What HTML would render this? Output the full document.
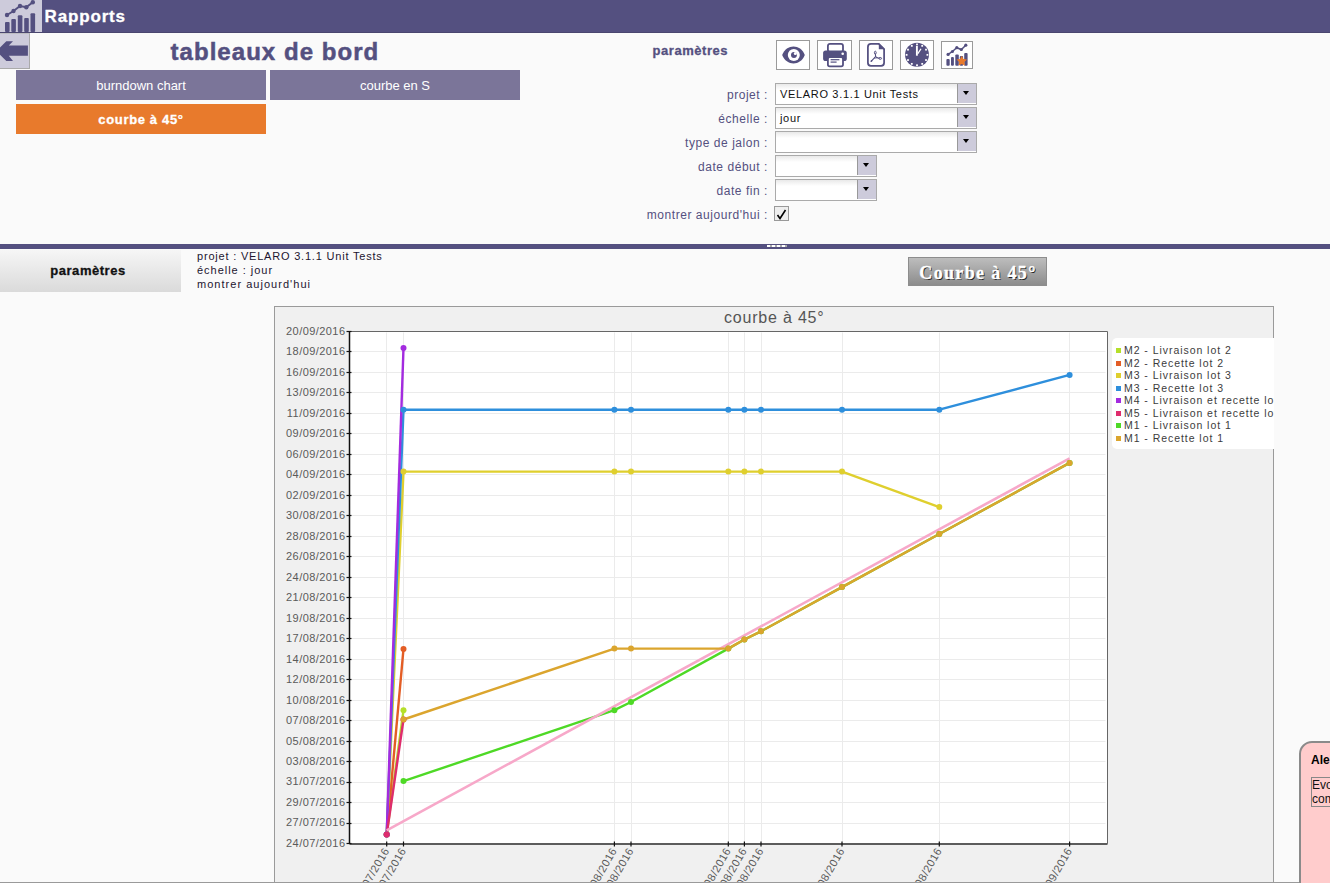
<!DOCTYPE html>
<html><head><meta charset="utf-8">
<style>
*{margin:0;padding:0;box-sizing:border-box}
html,body{width:1330px;height:883px;overflow:hidden;background:#fafafa;font-family:"Liberation Sans",sans-serif}
.a{position:absolute}
.t{position:absolute;white-space:nowrap;line-height:1}
#hdr{left:0;top:0;width:1330px;height:33px;background:#545080;border-bottom:1px solid #4a466f}
#hicon{left:0;top:0;width:42px;height:32px;background:#cdcbdb}
#back{left:0;top:33px;width:30px;height:36px;background:#cdcbdb;border-right:1px solid #aaa;border-bottom:1px solid #aaa;border-top:1px solid #bdbdc2}
.tab{position:absolute;height:30px;background:#7b7599;color:#fff;font-size:13px;text-align:center;line-height:30px;padding-top:1px}
.tbtn{position:absolute;top:40px;width:34px;height:30px;background:#fff;border:1px solid #9a9a9a}
.lbl{position:absolute;color:#545080;font-size:12px;text-align:right;white-space:nowrap;line-height:1;letter-spacing:0.55px}
.sel{position:absolute;left:775px;height:22px;border:1px solid #aaa;background:linear-gradient(#e9e9e9,#fff 6px,#fff)}
.sel .bt{position:absolute;right:0;top:0;width:19px;height:19px;background:#cdcbdb;border-left:1px solid #999}
.sel .bt:after{content:"";position:absolute;left:5.2px;top:7px;border-left:3.7px solid transparent;border-right:3.7px solid transparent;border-top:4.3px solid #000}
.sel .v{position:absolute;left:4px;top:4.6px;font-size:11px;color:#111;white-space:nowrap;line-height:1;letter-spacing:0.67px}
#split{left:0;top:244px;width:1330px;height:5px;background:#545080}
#ptab{left:0;top:250px;width:181px;height:42px;background:linear-gradient(#f6f6f6,#dadada);font-weight:bold;font-size:13px;text-align:center;line-height:42px;color:#111;letter-spacing:0.53px;padding-right:5px;-webkit-text-stroke:0.3px #111}
.info{position:absolute;left:197px;font-size:11px;color:#1d1530;white-space:nowrap;line-height:1;letter-spacing:0.8px}
#bigbtn{left:908px;top:257px;width:139px;height:29px;border:1px solid #8d8d8d;background:linear-gradient(#bdbdbd,#8c8c8c);color:#fff;font-family:"Liberation Serif",serif;font-weight:bold;font-size:18px;text-align:center;line-height:27px;text-shadow:1px 1px 0.6px #222;letter-spacing:1.35px;padding-left:1px;padding-top:1.5px;-webkit-text-stroke:0.35px #fff}
#chart{left:274px;top:306px;width:1000px;height:577px;background:#f0f0f0;overflow:hidden}
#cbord{left:0;top:0;width:1000px;height:600px;border:1px solid #9a9a9a}
#chart svg{position:absolute;left:0;top:0}
.yl{font-family:"Liberation Sans",sans-serif;font-size:11px;fill:#5a5a5a;letter-spacing:0.44px}
.xl{font-family:"Liberation Sans",sans-serif;font-size:11px;fill:#5a5a5a;letter-spacing:0.44px}
#ctitle{left:450px;top:4px;font-size:16px;color:#555;letter-spacing:0.8px}
#legend{left:838px;top:32px;width:200px;height:111px;background:#fff;border-radius:5px}
.li{position:absolute;left:0;height:12px;white-space:nowrap}
.sw{position:absolute;left:3.5px;top:3px;width:5.2px;height:5.2px}
.lt{position:absolute;left:12px;top:0;font-size:10.5px;color:#3c3c3c;line-height:1;letter-spacing:0.95px}
#bline{left:0;top:882px;width:1330px;height:1px;background:#9a9a9a}
#alert{left:1299px;top:741px;width:100px;height:160px;background:#ffcccc;border:2px solid #8a8a8a;border-radius:13px}
</style></head><body>
<div id="hdr" class="a"></div>
<div id="hicon" class="a">
<svg width="42" height="32" viewBox="0 0 42 32">
<g fill="#545080">
<rect x="5" y="22" width="4.6" height="10" rx="1"/>
<rect x="11.3" y="19" width="4.6" height="13" rx="1"/>
<rect x="17.8" y="15.2" width="4.6" height="16.8" rx="1"/>
<rect x="24.2" y="18" width="4.6" height="14" rx="1"/>
<rect x="30.5" y="13.2" width="4.6" height="18.8" rx="1"/>
<circle cx="7" cy="15" r="2.2"/><circle cx="13.5" cy="11" r="2.2"/><circle cx="20" cy="6" r="2.2"/><circle cx="26.3" cy="7.3" r="2.2"/><circle cx="32.8" cy="2.2" r="2.2"/>
</g>
<path d="M7 15 L13.5 11 L20 6 L26.3 7.3 L32.8 2.2" fill="none" stroke="#545080" stroke-width="2"/>
</svg></div>
<div class="t" style="left:44.5px;top:8px;font-size:17px;font-weight:bold;color:#fff;letter-spacing:0.85px;-webkit-text-stroke:0.3px #fff">Rapports</div>
<div id="back" class="a">
<svg width="29" height="35" viewBox="0 0 29 35"><path d="M6.3 7.2 L13 7.2 L8.8 11.6 L27.9 11.6 L27.9 21.8 L8.8 21.8 L13 27 L6.3 27 L-3.6 17 Z" fill="#545080"/></svg>
</div>
<div class="t" style="left:170.5px;top:40px;font-size:24px;font-weight:bold;color:#545080;letter-spacing:1.05px;-webkit-text-stroke:0.5px #545080">tableaux de bord</div>
<div class="tab" style="left:16px;top:70px;width:250px">burndown chart</div>
<div class="tab" style="left:270px;top:70px;width:250px">courbe en S</div>
<div class="tab" style="left:16px;top:104px;width:250px;background:#e87a2c;font-weight:bold;letter-spacing:0.65px;-webkit-text-stroke:0.3px #fff">courbe à 45°</div>

<div class="t" style="left:652.5px;top:44px;font-size:13px;font-weight:bold;color:#545080;letter-spacing:0.55px;-webkit-text-stroke:0.3px #545080">paramètres</div>
<div class="tbtn" style="left:776px"><svg width="32" height="28" viewBox="0 0 32 28"><path d="M5.2 13.9 C9.5 2.6, 23.5 2.6, 27.8 13.9 C23.5 25.2, 9.5 25.2, 5.2 13.9 Z" fill="#545080"/><circle cx="16.8" cy="14" r="6" fill="#fff"/><circle cx="16.95" cy="13.95" r="2.95" fill="#545080"/><circle cx="18.3" cy="12.6" r="1.5" fill="#fff"/></svg></div>
<div class="tbtn" style="left:817px;width:35px"><svg width="33" height="28" viewBox="0 0 33 28"><rect x="9.9" y="2.9" width="15.1" height="8" rx="2" fill="none" stroke="#545080" stroke-width="1.8"/><rect x="5.1" y="9.4" width="23.7" height="10.6" rx="2.6" fill="#545080"/><rect x="9.9" y="16.2" width="15.1" height="9.1" rx="1.8" fill="#fff" stroke="#545080" stroke-width="1.8"/><rect x="12.6" y="18.1" width="8.8" height="1.2" fill="#545080"/><rect x="12.6" y="20.5" width="6" height="1.2" fill="#545080"/><circle cx="24.7" cy="12.7" r="1.3" fill="#fff"/></svg></div>
<div class="tbtn" style="left:859px"><svg width="32" height="28" viewBox="0 0 32 28"><path d="M10.9 2.9 L18.8 2.9 L24.1 8.2 L24.1 21.8 Q24.1 24.8 21.1 24.8 L10.9 24.8 Q7.9 24.8 7.9 21.8 L7.9 5.9 Q7.9 2.9 10.9 2.9 Z" fill="none" stroke="#545080" stroke-width="1.75"/><path d="M18.8 2.2 L24.9 8.3 L18.8 8.3 Z" fill="#545080"/><path d="M15.4 13 L15.6 15.4 M14.4 16.9 L11.1 20.3 M16.9 16.6 L19.2 17.2" fill="none" stroke="#545080" stroke-width="1.1" stroke-linecap="round"/><ellipse cx="15.3" cy="11.7" rx="0.9" ry="1.5" fill="none" stroke="#545080" stroke-width="1"/><ellipse cx="20.2" cy="17.4" rx="1.4" ry="0.9" fill="none" stroke="#545080" stroke-width="1"/><path d="M15.5 15.2 L17.1 16.7 L14.3 17.1 Z" fill="none" stroke="#545080" stroke-width="1"/><circle cx="11.5" cy="19.9" r="0.8" fill="#545080"/></svg></div>
<div class="tbtn" style="left:900px"><svg width="32" height="28" viewBox="0 0 32 28"><circle cx="16" cy="13.85" r="12" fill="#545080"/><g fill="#fff"><rect x="15.10" y="2.55" width="1.8" height="1.8"/><rect x="20.30" y="3.94" width="1.8" height="1.8"/><rect x="24.11" y="7.75" width="1.8" height="1.8"/><rect x="25.50" y="12.95" width="1.8" height="1.8"/><rect x="24.11" y="18.15" width="1.8" height="1.8"/><rect x="20.30" y="21.96" width="1.8" height="1.8"/><rect x="15.10" y="23.35" width="1.8" height="1.8"/><rect x="9.90" y="21.96" width="1.8" height="1.8"/><rect x="6.09" y="18.15" width="1.8" height="1.8"/><rect x="4.70" y="12.95" width="1.8" height="1.8"/><rect x="6.09" y="7.75" width="1.8" height="1.8"/><rect x="9.90" y="3.94" width="1.8" height="1.8"/></g><path d="M15.9 5 L15.9 14.7" stroke="#fff" stroke-width="1.9"/><path d="M17 12.3 L19.8 8.2" stroke="#fff" stroke-width="1.2" stroke-linecap="round"/></svg></div>
<div class="tbtn" style="left:941px;top:41px;width:32px;height:28px"><svg width="30" height="26" viewBox="0 0 30 26"><g fill="#545080"><rect x="4.4" y="16.9" width="3.3" height="6.9" rx="1"/><rect x="9" y="15.1" width="2.9" height="8.7" rx="1"/><rect x="13.3" y="12.4" width="3.5" height="11.4" rx="1"/><rect x="17.8" y="14" width="3.3" height="9.8" rx="1"/><rect x="22.2" y="11" width="3.4" height="12.8" rx="1"/><circle cx="6.1" cy="12.4" r="1.6"/><circle cx="10.4" cy="9.5" r="1.6"/><circle cx="14.8" cy="5.7" r="1.6"/><circle cx="19.3" cy="7.5" r="1.6"/><circle cx="23.8" cy="3.2" r="1.6"/></g><path d="M6.1 12.4 L10.4 9.5 L14.8 5.7 L19.3 7.5 L23.8 3.2" fill="none" stroke="#545080" stroke-width="1.5"/><path d="M19.75 13.70 L21.40 16.93 L24.98 17.50 L22.41 20.07 L22.98 23.65 L19.75 22.00 L16.52 23.65 L17.09 20.07 L14.52 17.50 L18.10 16.93 Z" fill="#e87a2c"/></svg></div>

<div class="lbl" style="right:562px;top:89px">projet :</div>
<div class="lbl" style="right:562px;top:113px">échelle :</div>
<div class="lbl" style="right:562px;top:137px">type de jalon :</div>
<div class="lbl" style="right:562px;top:161px">date début :</div>
<div class="lbl" style="right:562px;top:185px">date fin :</div>
<div class="lbl" style="right:562px;top:209px">montrer aujourd'hui :</div>
<div class="sel" style="top:83px;width:202px"><span class="v">VELARO 3.1.1 Unit Tests</span><span class="bt"></span></div>
<div class="sel" style="top:107px;width:202px"><span class="v">jour</span><span class="bt"></span></div>
<div class="sel" style="top:131px;width:202px"><span class="bt"></span></div>
<div class="sel" style="top:155px;width:102px"><span class="bt"></span></div>
<div class="sel" style="top:179px;width:102px"><span class="bt"></span></div>
<div class="a" style="left:774px;top:206px;width:15px;height:15px;border:1px solid #999;background:#eee"><svg width="13" height="13" viewBox="0 0 13 13"><path d="M2.5 7 L5 10.5 L10.5 2" fill="none" stroke="#000" stroke-width="1.6"/></svg></div>

<div id="split" class="a"><div class="a" style="left:767px;top:1px;width:20px;height:2px;background:repeating-linear-gradient(90deg,#fff 0,#fff 3px,#aaa 3px,#aaa 5px)"></div></div>
<div id="ptab" class="a">paramètres</div>
<div class="info" style="top:251.3px">projet : VELARO 3.1.1 Unit Tests</div>
<div class="info" style="top:265.1px;letter-spacing:0.98px">échelle : jour</div>
<div class="info" style="top:278.6px;letter-spacing:1.03px">montrer aujourd'hui</div>
<div id="bigbtn" class="a">Courbe à 45°</div>

<div id="chart" class="a">
<div id="cbord" class="a"></div>
<svg width="1000" height="577" viewBox="274 306 1000 577">
<rect x="349.5" y="331.5" width="758.0" height="512.0" fill="#fff"/>
<line x1="351.5" y1="351.50" x2="1105.5" y2="351.50" stroke="#ebebeb" stroke-width="1"/>
<line x1="351.5" y1="372.50" x2="1105.5" y2="372.50" stroke="#ebebeb" stroke-width="1"/>
<line x1="351.5" y1="392.50" x2="1105.5" y2="392.50" stroke="#ebebeb" stroke-width="1"/>
<line x1="351.5" y1="413.50" x2="1105.5" y2="413.50" stroke="#ebebeb" stroke-width="1"/>
<line x1="351.5" y1="433.50" x2="1105.5" y2="433.50" stroke="#ebebeb" stroke-width="1"/>
<line x1="351.5" y1="454.50" x2="1105.5" y2="454.50" stroke="#ebebeb" stroke-width="1"/>
<line x1="351.5" y1="474.50" x2="1105.5" y2="474.50" stroke="#ebebeb" stroke-width="1"/>
<line x1="351.5" y1="495.50" x2="1105.5" y2="495.50" stroke="#ebebeb" stroke-width="1"/>
<line x1="351.5" y1="515.50" x2="1105.5" y2="515.50" stroke="#ebebeb" stroke-width="1"/>
<line x1="351.5" y1="536.50" x2="1105.5" y2="536.50" stroke="#ebebeb" stroke-width="1"/>
<line x1="351.5" y1="556.50" x2="1105.5" y2="556.50" stroke="#ebebeb" stroke-width="1"/>
<line x1="351.5" y1="577.50" x2="1105.5" y2="577.50" stroke="#ebebeb" stroke-width="1"/>
<line x1="351.5" y1="597.50" x2="1105.5" y2="597.50" stroke="#ebebeb" stroke-width="1"/>
<line x1="351.5" y1="618.50" x2="1105.5" y2="618.50" stroke="#ebebeb" stroke-width="1"/>
<line x1="351.5" y1="638.50" x2="1105.5" y2="638.50" stroke="#ebebeb" stroke-width="1"/>
<line x1="351.5" y1="659.50" x2="1105.5" y2="659.50" stroke="#ebebeb" stroke-width="1"/>
<line x1="351.5" y1="679.50" x2="1105.5" y2="679.50" stroke="#ebebeb" stroke-width="1"/>
<line x1="351.5" y1="700.50" x2="1105.5" y2="700.50" stroke="#ebebeb" stroke-width="1"/>
<line x1="351.5" y1="720.50" x2="1105.5" y2="720.50" stroke="#ebebeb" stroke-width="1"/>
<line x1="351.5" y1="741.50" x2="1105.5" y2="741.50" stroke="#ebebeb" stroke-width="1"/>
<line x1="351.5" y1="761.50" x2="1105.5" y2="761.50" stroke="#ebebeb" stroke-width="1"/>
<line x1="351.5" y1="782.50" x2="1105.5" y2="782.50" stroke="#ebebeb" stroke-width="1"/>
<line x1="351.5" y1="802.50" x2="1105.5" y2="802.50" stroke="#ebebeb" stroke-width="1"/>
<line x1="351.5" y1="823.50" x2="1105.5" y2="823.50" stroke="#ebebeb" stroke-width="1"/>
<line x1="386.5" y1="332.5" x2="386.5" y2="842.5" stroke="#ebebeb" stroke-width="1"/>
<line x1="403.5" y1="332.5" x2="403.5" y2="842.5" stroke="#ebebeb" stroke-width="1"/>
<line x1="614.5" y1="332.5" x2="614.5" y2="842.5" stroke="#ebebeb" stroke-width="1"/>
<line x1="631.5" y1="332.5" x2="631.5" y2="842.5" stroke="#ebebeb" stroke-width="1"/>
<line x1="728.5" y1="332.5" x2="728.5" y2="842.5" stroke="#ebebeb" stroke-width="1"/>
<line x1="744.5" y1="332.5" x2="744.5" y2="842.5" stroke="#ebebeb" stroke-width="1"/>
<line x1="761.5" y1="332.5" x2="761.5" y2="842.5" stroke="#ebebeb" stroke-width="1"/>
<line x1="842.5" y1="332.5" x2="842.5" y2="842.5" stroke="#ebebeb" stroke-width="1"/>
<line x1="939.5" y1="332.5" x2="939.5" y2="842.5" stroke="#ebebeb" stroke-width="1"/>
<line x1="1069.5" y1="332.5" x2="1069.5" y2="842.5" stroke="#ebebeb" stroke-width="1"/>
<path d="M349.5 843.5 L349.5 331.5 L1107.5 331.5 L1107.5 843.5 Z" fill="none" stroke="#666" stroke-width="1"/>
<line x1="349.5" y1="331.5" x2="349.5" y2="843.5" stroke="#111" stroke-width="1.5"/>
<line x1="349.5" y1="843.9" x2="1107.5" y2="843.9" stroke="#5c5c5c" stroke-width="2"/>
<line x1="346.5" y1="331.50" x2="351.5" y2="331.50" stroke="#111" stroke-width="1.2"/>
<text x="345.5" y="334.90" text-anchor="end" class="yl">20/09/2016</text>
<line x1="346.5" y1="351.50" x2="351.5" y2="351.50" stroke="#111" stroke-width="1.2"/>
<text x="345.5" y="355.38" text-anchor="end" class="yl">18/09/2016</text>
<line x1="346.5" y1="372.50" x2="351.5" y2="372.50" stroke="#111" stroke-width="1.2"/>
<text x="345.5" y="375.86" text-anchor="end" class="yl">16/09/2016</text>
<line x1="346.5" y1="392.50" x2="351.5" y2="392.50" stroke="#111" stroke-width="1.2"/>
<text x="345.5" y="396.34" text-anchor="end" class="yl">13/09/2016</text>
<line x1="346.5" y1="413.50" x2="351.5" y2="413.50" stroke="#111" stroke-width="1.2"/>
<text x="345.5" y="416.82" text-anchor="end" class="yl">11/09/2016</text>
<line x1="346.5" y1="433.50" x2="351.5" y2="433.50" stroke="#111" stroke-width="1.2"/>
<text x="345.5" y="437.30" text-anchor="end" class="yl">09/09/2016</text>
<line x1="346.5" y1="454.50" x2="351.5" y2="454.50" stroke="#111" stroke-width="1.2"/>
<text x="345.5" y="457.78" text-anchor="end" class="yl">06/09/2016</text>
<line x1="346.5" y1="474.50" x2="351.5" y2="474.50" stroke="#111" stroke-width="1.2"/>
<text x="345.5" y="478.26" text-anchor="end" class="yl">04/09/2016</text>
<line x1="346.5" y1="495.50" x2="351.5" y2="495.50" stroke="#111" stroke-width="1.2"/>
<text x="345.5" y="498.74" text-anchor="end" class="yl">02/09/2016</text>
<line x1="346.5" y1="515.50" x2="351.5" y2="515.50" stroke="#111" stroke-width="1.2"/>
<text x="345.5" y="519.22" text-anchor="end" class="yl">30/08/2016</text>
<line x1="346.5" y1="536.50" x2="351.5" y2="536.50" stroke="#111" stroke-width="1.2"/>
<text x="345.5" y="539.70" text-anchor="end" class="yl">28/08/2016</text>
<line x1="346.5" y1="556.50" x2="351.5" y2="556.50" stroke="#111" stroke-width="1.2"/>
<text x="345.5" y="560.18" text-anchor="end" class="yl">26/08/2016</text>
<line x1="346.5" y1="577.50" x2="351.5" y2="577.50" stroke="#111" stroke-width="1.2"/>
<text x="345.5" y="580.66" text-anchor="end" class="yl">24/08/2016</text>
<line x1="346.5" y1="597.50" x2="351.5" y2="597.50" stroke="#111" stroke-width="1.2"/>
<text x="345.5" y="601.14" text-anchor="end" class="yl">21/08/2016</text>
<line x1="346.5" y1="618.50" x2="351.5" y2="618.50" stroke="#111" stroke-width="1.2"/>
<text x="345.5" y="621.62" text-anchor="end" class="yl">19/08/2016</text>
<line x1="346.5" y1="638.50" x2="351.5" y2="638.50" stroke="#111" stroke-width="1.2"/>
<text x="345.5" y="642.10" text-anchor="end" class="yl">17/08/2016</text>
<line x1="346.5" y1="659.50" x2="351.5" y2="659.50" stroke="#111" stroke-width="1.2"/>
<text x="345.5" y="662.58" text-anchor="end" class="yl">14/08/2016</text>
<line x1="346.5" y1="679.50" x2="351.5" y2="679.50" stroke="#111" stroke-width="1.2"/>
<text x="345.5" y="683.06" text-anchor="end" class="yl">12/08/2016</text>
<line x1="346.5" y1="700.50" x2="351.5" y2="700.50" stroke="#111" stroke-width="1.2"/>
<text x="345.5" y="703.54" text-anchor="end" class="yl">10/08/2016</text>
<line x1="346.5" y1="720.50" x2="351.5" y2="720.50" stroke="#111" stroke-width="1.2"/>
<text x="345.5" y="724.02" text-anchor="end" class="yl">07/08/2016</text>
<line x1="346.5" y1="741.50" x2="351.5" y2="741.50" stroke="#111" stroke-width="1.2"/>
<text x="345.5" y="744.50" text-anchor="end" class="yl">05/08/2016</text>
<line x1="346.5" y1="761.50" x2="351.5" y2="761.50" stroke="#111" stroke-width="1.2"/>
<text x="345.5" y="764.98" text-anchor="end" class="yl">03/08/2016</text>
<line x1="346.5" y1="782.50" x2="351.5" y2="782.50" stroke="#111" stroke-width="1.2"/>
<text x="345.5" y="785.46" text-anchor="end" class="yl">31/07/2016</text>
<line x1="346.5" y1="802.50" x2="351.5" y2="802.50" stroke="#111" stroke-width="1.2"/>
<text x="345.5" y="805.94" text-anchor="end" class="yl">29/07/2016</text>
<line x1="346.5" y1="823.50" x2="351.5" y2="823.50" stroke="#111" stroke-width="1.2"/>
<text x="345.5" y="826.42" text-anchor="end" class="yl">27/07/2016</text>
<line x1="346.5" y1="843.50" x2="351.5" y2="843.50" stroke="#111" stroke-width="1.2"/>
<text x="345.5" y="846.90" text-anchor="end" class="yl">24/07/2016</text>
<line x1="386.7" y1="841.5" x2="386.7" y2="846.5" stroke="#111" stroke-width="1.2"/>
<line x1="403.5" y1="841.5" x2="403.5" y2="846.5" stroke="#111" stroke-width="1.2"/>
<line x1="614.4" y1="841.5" x2="614.4" y2="846.5" stroke="#111" stroke-width="1.2"/>
<line x1="631" y1="841.5" x2="631" y2="846.5" stroke="#111" stroke-width="1.2"/>
<line x1="728.3" y1="841.5" x2="728.3" y2="846.5" stroke="#111" stroke-width="1.2"/>
<line x1="744.4" y1="841.5" x2="744.4" y2="846.5" stroke="#111" stroke-width="1.2"/>
<line x1="761" y1="841.5" x2="761" y2="846.5" stroke="#111" stroke-width="1.2"/>
<line x1="842" y1="841.5" x2="842" y2="846.5" stroke="#111" stroke-width="1.2"/>
<line x1="939.3" y1="841.5" x2="939.3" y2="846.5" stroke="#111" stroke-width="1.2"/>
<line x1="1069.6" y1="841.5" x2="1069.6" y2="846.5" stroke="#111" stroke-width="1.2"/>
<text transform="translate(389.7,850.5) rotate(-60)" text-anchor="end" class="xl">25/07/2016</text>
<text transform="translate(406.5,850.5) rotate(-60)" text-anchor="end" class="xl">26/07/2016</text>
<text transform="translate(617.4,850.5) rotate(-60)" text-anchor="end" class="xl">08/08/2016</text>
<text transform="translate(634,850.5) rotate(-60)" text-anchor="end" class="xl">09/08/2016</text>
<text transform="translate(731.3,850.5) rotate(-60)" text-anchor="end" class="xl">15/08/2016</text>
<text transform="translate(747.4,850.5) rotate(-60)" text-anchor="end" class="xl">16/08/2016</text>
<text transform="translate(764,850.5) rotate(-60)" text-anchor="end" class="xl">17/08/2016</text>
<text transform="translate(845,850.5) rotate(-60)" text-anchor="end" class="xl">22/08/2016</text>
<text transform="translate(942.3,850.5) rotate(-60)" text-anchor="end" class="xl">28/08/2016</text>
<text transform="translate(1072.6,850.5) rotate(-60)" text-anchor="end" class="xl">05/09/2016</text>
<path d="M386.7 834.4 L403.5 710.3" fill="none" stroke="#b5df2a" stroke-width="2.4" stroke-linejoin="round"/>
<path d="M386.7 834.4 L403.5 648.9" fill="none" stroke="#e35d25" stroke-width="2.4" stroke-linejoin="round"/>
<path d="M386.7 834.4 L403.5 471.6 L614.4 471.6 L631 471.6 L728.3 471.6 L744.4 471.6 L761 471.6 L842 471.6 L939.3 507.1" fill="none" stroke="#dfcf2e" stroke-width="2.4" stroke-linejoin="round"/>
<path d="M386.7 834.4 L403.5 409.7 L614.4 409.7 L631 409.7 L728.3 409.7 L744.4 409.7 L761 409.7 L842 409.7 L939.3 409.7 L1069.6 374.9" fill="none" stroke="#2e8fdc" stroke-width="2.4" stroke-linejoin="round"/>
<path d="M386.7 834.4 L403.5 347.9" fill="none" stroke="#a32bdf" stroke-width="2.4" stroke-linejoin="round"/>
<path d="M386.7 834.4 L403.5 719.5" fill="none" stroke="#df2c6c" stroke-width="2.4" stroke-linejoin="round"/>
<path d="M403.5 781.1 L614.4 710.2 L631 702 L728.3 648.6 L744.4 639.5 L761 631.3 L842 587.1 L939.3 534 L1069.6 462.9" fill="none" stroke="#4ed926" stroke-width="2.4" stroke-linejoin="round"/>
<line x1="386.7" y1="830.3" x2="1069.6" y2="458.3" stroke="#f7a8c9" stroke-width="2.6"/>
<path d="M403.5 719.5 L614.4 648.6 L631 648.6 L728.3 648.6 L744.4 639.5 L761 631.3 L842 587.1 L939.3 534 L1069.6 462.9" fill="none" stroke="#dba52e" stroke-width="2.4" stroke-linejoin="round"/>
<circle cx="386.7" cy="834.4" r="3" fill="#b5df2a"/>
<circle cx="403.5" cy="710.3" r="3" fill="#b5df2a"/>
<circle cx="386.7" cy="834.4" r="3" fill="#e35d25"/>
<circle cx="403.5" cy="648.9" r="3" fill="#e35d25"/>
<circle cx="386.7" cy="834.4" r="3" fill="#dfcf2e"/>
<circle cx="403.5" cy="471.6" r="3" fill="#dfcf2e"/>
<circle cx="614.4" cy="471.6" r="3" fill="#dfcf2e"/>
<circle cx="631" cy="471.6" r="3" fill="#dfcf2e"/>
<circle cx="728.3" cy="471.6" r="3" fill="#dfcf2e"/>
<circle cx="744.4" cy="471.6" r="3" fill="#dfcf2e"/>
<circle cx="761" cy="471.6" r="3" fill="#dfcf2e"/>
<circle cx="842" cy="471.6" r="3" fill="#dfcf2e"/>
<circle cx="939.3" cy="507.1" r="3" fill="#dfcf2e"/>
<circle cx="386.7" cy="834.4" r="3" fill="#2e8fdc"/>
<circle cx="403.5" cy="409.7" r="3" fill="#2e8fdc"/>
<circle cx="614.4" cy="409.7" r="3" fill="#2e8fdc"/>
<circle cx="631" cy="409.7" r="3" fill="#2e8fdc"/>
<circle cx="728.3" cy="409.7" r="3" fill="#2e8fdc"/>
<circle cx="744.4" cy="409.7" r="3" fill="#2e8fdc"/>
<circle cx="761" cy="409.7" r="3" fill="#2e8fdc"/>
<circle cx="842" cy="409.7" r="3" fill="#2e8fdc"/>
<circle cx="939.3" cy="409.7" r="3" fill="#2e8fdc"/>
<circle cx="1069.6" cy="374.9" r="3" fill="#2e8fdc"/>
<circle cx="386.7" cy="834.4" r="3" fill="#a32bdf"/>
<circle cx="403.5" cy="347.9" r="3" fill="#a32bdf"/>
<circle cx="386.7" cy="834.4" r="3" fill="#df2c6c"/>
<circle cx="403.5" cy="719.5" r="3" fill="#df2c6c"/>
<circle cx="403.5" cy="781.1" r="3" fill="#4ed926"/>
<circle cx="614.4" cy="710.2" r="3" fill="#4ed926"/>
<circle cx="631" cy="702" r="3" fill="#4ed926"/>
<circle cx="728.3" cy="648.6" r="3" fill="#4ed926"/>
<circle cx="744.4" cy="639.5" r="3" fill="#4ed926"/>
<circle cx="761" cy="631.3" r="3" fill="#4ed926"/>
<circle cx="842" cy="587.1" r="3" fill="#4ed926"/>
<circle cx="939.3" cy="534" r="3" fill="#4ed926"/>
<circle cx="1069.6" cy="462.9" r="3" fill="#4ed926"/>
<circle cx="403.5" cy="719.5" r="3" fill="#dba52e"/>
<circle cx="614.4" cy="648.6" r="3" fill="#dba52e"/>
<circle cx="631" cy="648.6" r="3" fill="#dba52e"/>
<circle cx="728.3" cy="648.6" r="3" fill="#dba52e"/>
<circle cx="744.4" cy="639.5" r="3" fill="#dba52e"/>
<circle cx="761" cy="631.3" r="3" fill="#dba52e"/>
<circle cx="842" cy="587.1" r="3" fill="#dba52e"/>
<circle cx="939.3" cy="534" r="3" fill="#dba52e"/>
<circle cx="1069.6" cy="462.9" r="3" fill="#dba52e"/>
</svg>
<div id="ctitle" class="t">courbe à 45°</div>
<div id="legend" class="a">
<div class="li" style="top:7.0px"><span class="sw" style="background:#b5df2a"></span><span class="lt">M2 - Livraison lot 2</span></div>
<div class="li" style="top:19.5px"><span class="sw" style="background:#e35d25"></span><span class="lt">M2 - Recette lot 2</span></div>
<div class="li" style="top:32.0px"><span class="sw" style="background:#dfcf2e"></span><span class="lt">M3 - Livraison lot 3</span></div>
<div class="li" style="top:44.5px"><span class="sw" style="background:#2e8fdc"></span><span class="lt">M3 - Recette lot 3</span></div>
<div class="li" style="top:57.0px"><span class="sw" style="background:#a32bdf"></span><span class="lt">M4 - Livraison et recette lot 4</span></div>
<div class="li" style="top:69.5px"><span class="sw" style="background:#df2c6c"></span><span class="lt">M5 - Livraison et recette lot 5</span></div>
<div class="li" style="top:82.0px"><span class="sw" style="background:#4ed926"></span><span class="lt">M1 - Livraison lot 1</span></div>
<div class="li" style="top:94.5px"><span class="sw" style="background:#dba52e"></span><span class="lt">M1 - Recette lot 1</span></div>
</div>
</div>
<div id="bline" class="a"></div>
<div id="alert" class="a">
<div class="t" style="left:10px;top:10.5px;font-size:12px;font-weight:bold;color:#000">Alertes</div>
<div class="a" style="left:10px;top:34px;width:120px;height:30px;border:1px solid #888;font-size:12px;line-height:14px;color:#111;padding:0 0">Evolution<br>com</div>
</div>
</body></html>
